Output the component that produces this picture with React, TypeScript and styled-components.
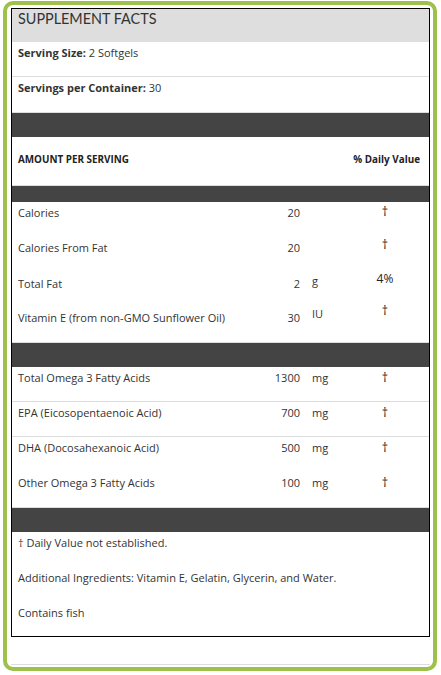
import React from "react";
import styled, { createGlobalStyle } from "styled-components";

const Global = createGlobalStyle`
  html, body { margin: 0; padding: 0; background: #fff; }
  body { font-family: "Open Sans", Lato, "Liberation Sans", sans-serif; color: #333; }
`;

const Frame = styled.div`
  box-sizing: border-box;
  width: 434px;
  height: 670px;
  margin: 1px 0 0 3px;
  border: 4px solid #9dc14a;
  border-radius: 10px;
  padding: 3px 3px 0 4px;
  display: flex;
  flex-direction: column;
`;

const Box = styled.div`
  border: 1px solid #000;
  display: flex;
  flex-direction: column;
`;

const Title = styled.div`
  height: 33px;
  background: #dedede;
  padding: 0 6px;
  font-family: Lato, "Open Sans", sans-serif;
  font-size: 14.4px;
  font-weight: 400;
  line-height: 19px;
  box-sizing: border-box;
  color: #333;
`;

const InfoRow = styled.div<{ $h: number; $line?: boolean }>`
  box-sizing: border-box;
  height: ${(p) => p.$h}px;
  padding: 4px 6px 0;
  font-size: 11px;
  line-height: 14px;
  border-bottom: ${(p) => (p.$line ? "1px solid #ddd" : "none")};
`;

const Strong = styled.b`
  font-weight: 700;
`;

const DarkBand = styled.div<{ $h: number }>`
  height: ${(p) => p.$h}px;
  background: #444;
  border-top: 1px solid #ddd;
`;

const HeadRow = styled.div`
  box-sizing: border-box;
  height: 48px;
  display: flex;
  align-items: flex-start;
  justify-content: space-between;
  padding: 15px 9px 0 6px;
  font-size: 9.9px;
  line-height: 14px;
  font-weight: 700;
  color: #222;
`;

const Grid = styled.div<{ $line?: boolean }>`
  box-sizing: border-box;
  height: 35px;
  display: grid;
  grid-template-columns: 1fr 40px 45px 80px 4px;
  align-items: start;
  padding-top: 4px;
  font-size: 11px;
  line-height: 14px;
  border-bottom: ${(p) => (p.$line ? "1px solid #ddd" : "none")};
`;

const Label = styled.div<{ $drop?: number }>`
  padding-left: 6px;
  margin-top: ${(p) => p.$drop || 0}px;
`;

const Amount = styled.div<{ $drop?: number }>`
  text-align: right;
  margin-top: ${(p) => p.$drop || 0}px;
`;

const Unit = styled.div<{ $drop?: number }>`
  padding-left: 12px;
  margin-top: ${(p) => p.$drop || 0}px;
`;

const DV = styled.div<{ $drop?: number; $big?: boolean }>`
  text-align: center;
  font-size: ${(p) => (p.$big ? 12.5 : 12)}px;
  color: #222;
  margin-top: ${(p) => p.$drop || 0}px;
`;

const BottomLine = styled.div`
  margin-top: 27px;
  height: 1px;
  background: #ddd;
`;

type Row = {
  label: string;
  amt: string;
  unit?: string;
  dv: string;
  ld?: number;
  ud?: number;
  dd?: number;
  line?: boolean;
};

const basic: Row[] = [
  { label: "Calories", amt: "20", dv: "†", ld: 0, ud: 0, dd: -1 },
  { label: "Calories From Fat", amt: "20", dv: "†", ld: 0, ud: 0, dd: -3 },
  { label: "Total Fat", amt: "2", unit: "g", dv: "4%", ld: 1, ud: -2, dd: -4 },
  { label: "Vitamin E (from non-GMO Sunflower Oil)", amt: "30", unit: "IU", dv: "†", ld: 0, ud: -4, dd: -7 },
];

const omega: Row[] = [
  { label: "Total Omega 3 Fatty Acids", amt: "1300", unit: "mg", dv: "†", line: true },
  { label: "EPA (Eicosopentaenoic Acid)", amt: "700", unit: "mg", dv: "†", line: true },
  { label: "DHA (Docosahexanoic Acid)", amt: "500", unit: "mg", dv: "†" },
  { label: "Other Omega 3 Fatty Acids", amt: "100", unit: "mg", dv: "†" },
];

const NutrientRow = ({ r }: { r: Row }) => (
  <Grid $line={r.line}>
    <Label $drop={r.ld}>{r.label}</Label>
    <Amount $drop={r.ld}>{r.amt}</Amount>
    <Unit $drop={r.ud}>{r.unit || ""}</Unit>
    <DV $drop={r.dd} $big={r.dv === "†"}>{r.dv}</DV>
    <div />
  </Grid>
);

export default function App() {
  return (
    <>
      <Global />
      <Frame>
        <Box>
          <Title>SUPPLEMENT FACTS</Title>
          <InfoRow $h={35} $line>
            <Strong>Serving Size:</Strong> 2 Softgels
          </InfoRow>
          <InfoRow $h={35}>
            <Strong>Servings per Container:</Strong> 30
          </InfoRow>
          <DarkBand $h={24} />
          <HeadRow>
            <span>AMOUNT PER SERVING</span>
            <span>% Daily Value</span>
          </HeadRow>
          <DarkBand $h={16} />
          {basic.map((r) => (
            <NutrientRow key={r.label} r={r} />
          ))}
          <DarkBand $h={24} />
          {omega.map((r) => (
            <NutrientRow key={r.label} r={r} />
          ))}
          <DarkBand $h={24} />
          <InfoRow $h={35}>† Daily Value not established.</InfoRow>
          <InfoRow $h={35}>Additional Ingredients: Vitamin E, Gelatin, Glycerin, and Water.</InfoRow>
          <InfoRow $h={34}>Contains fish</InfoRow>
        </Box>
        <BottomLine />
      </Frame>
    </>
  );
}
